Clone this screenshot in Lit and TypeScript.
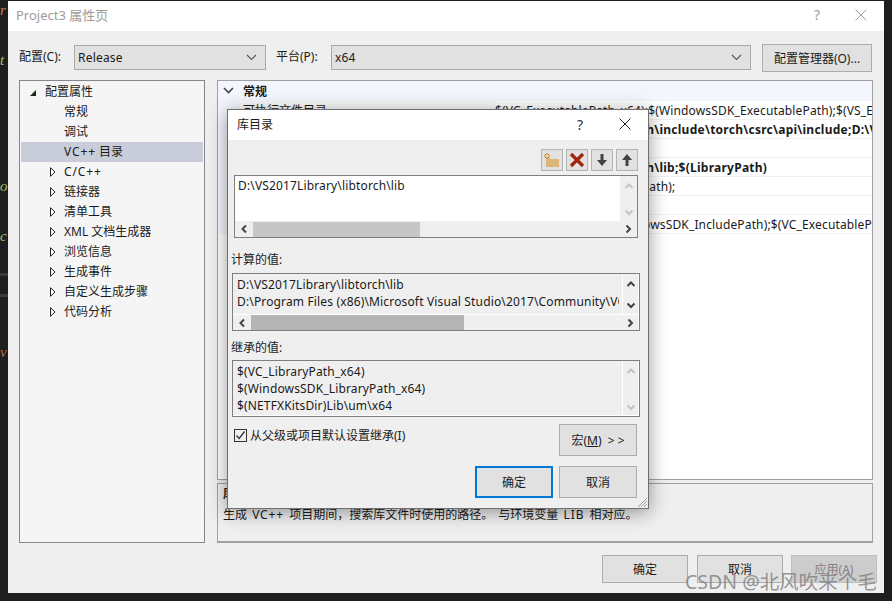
import { LitElement, html, css } from "lit";
import { customElement } from "lit/decorators.js";

const chev = (dir: "u" | "d" | "l" | "r", color: string) => {
  const p = { u: "M1.5 7 5 3.5 8.5 7", d: "M1.5 3.5 5 7 8.5 3.5", l: "M7 1.5 3.5 5 7 8.5", r: "M3.5 1.5 7 5 3.5 8.5" }[dir];
  return html`<svg width="10" height="10" viewBox="0 0 10 10"><path d=${p} fill="none" stroke=${color} stroke-width="2"/></svg>`;
};

const comboChev = html`<svg width="11" height="7" viewBox="0 0 11 7"><path d="M1 1 5.5 5.5 10 1" fill="none" stroke="#555" stroke-width="1.1"/></svg>`;

const ls = (t: string) => html`<span class="ls">${t}</span>`;

const treeItems: [unknown, boolean, boolean][] = [
  ["常规", false, false],
  ["调试", false, false],
  [html`${ls("VC++")} 目录`, false, true],
  [ls("C/C++"), true, false],
  ["链接器", true, false],
  ["清单工具", true, false],
  ["XML 文档生成器", true, false],
  ["浏览信息", true, false],
  ["生成事件", true, false],
  ["自定义生成步骤", true, false],
  ["代码分析", true, false],
];

const rows: [string, string, boolean][] = [
  ["可执行文件目录", "$(VC_ExecutablePath_x64);$(WindowsSDK_ExecutablePath);$(VS_ExecutablePath);$(MSBuild_ExecutablePath)", false],
  ["包含目录", "D:\\VS2017Library\\libtorch\\include\\torch\\csrc\\api\\include;D:\\VS2017Library\\libtorch\\include", true],
  ["引用目录", "$(VC_ReferencesPath_x64);", false],
  ["库目录", "D:\\VS2017Library\\libtorch\\lib;$(LibraryPath)", true],
  ["库 WinRT 目录", "$(WindowsSDK_MetadataPath);", false],
  ["源目录", "$(VC_SourcePath);", false],
  ["排除目录", "$(VC_IncludePath);$(WindowsSDK_IncludePath);$(VC_ExecutablePath_x64);$(VC_LibraryPath_x64)", false],
];

@customElement("app-root")
export class AppRoot extends LitElement {
  static styles = css`
    :host { display: block; width: 892px; height: 601px; position: relative; overflow: hidden; background: #1e1e1e;
      font-family: "Noto Sans", "Noto Sans CJK SC", sans-serif; font-size: 12px; color: #1a1a1a; }
    .ls { letter-spacing: .9px; }
    .bgcode { position: absolute; left: 0; font: italic 15px "Liberation Serif", serif; line-height: 16px; }
    .c1 { top: 2px; color: #d08050; }
    .c2 { top: 52px; color: #a5c070; }
    .c3 { top: 178px; color: #a5c070; }
    .c4 { top: 228px; color: #a5c070; }
    .c5 { top: 344px; color: #b06a40; }
    .bgline { position: absolute; left: 0; width: 8px; height: 3px; background: #3a3a3a; }
    .l1 { top: 273px; }
    .l2 { top: 294px; }
    .win { position: absolute; left: 8px; top: 1px; width: 876px; height: 592px; background: #efefef; display: flex; flex-direction: column; }
    .titlebar { height: 30px; box-sizing: border-box; flex: none; background: #fff; display: flex; align-items: center; padding: 0 0 3px 8px; color: #9c9c9c; font-size: 13px; }
    .titlebar .t { flex: 1; }
    .qmark { font-size: 14px; width: 12px; text-align: center; margin-right: 32px; }
    .dt .qmark { margin-right: 33px; color: #333; }
    .x { display: block; margin-right: 17px; }
    .cfg { display: flex; align-items: flex-start; height: 28px; margin-top: 13px; padding-left: 11px; }
    .cfg .lab { white-space: nowrap; width: 55px; line-height: 25px; }
    .cfg .lab.p { margin-left: 10px; }
    .combo { height: 25px; box-sizing: border-box; margin-top: 1px; background: #e1e1e1; border: 1px solid #a8a8a8; display: flex; align-items: center; justify-content: space-between; padding: 0 8px 1px 3px; letter-spacing: .2px; }
    .combo.a { width: 192px; }
    .combo.b { width: 420px; }
    .btn { box-sizing: border-box; background: #e1e1e1; border: 1px solid #adadad; display: flex; align-items: center; justify-content: center; white-space: nowrap; }
    .cm { width: 110px; height: 28px; margin-left: 11px; padding-bottom: 1px; }
    .panels { display: flex; margin-top: 8px; margin-left: 11px; height: 463px; }
    .tree { width: 186px; box-sizing: border-box; border: 1px solid #86878c; background: #f5f5f5; padding: 1px; flex: none; }
    .ti { height: 20px; box-sizing: border-box; display: flex; align-items: center; position: relative; padding: 0 0 2px 43px; white-space: pre; }
    .ti.root { padding-left: 24px; }
    .ti.sel { background: #c9ccd9; }
    .ti svg { position: absolute; }
    .tri { left: 9px; top: 8px; }
    .ex { left: 29px; top: 5px; }
    .right { width: 656px; margin-left: 12px; display: flex; flex-direction: column; flex: none; }
    .grid { height: 400px; box-sizing: border-box; border: 1px solid #a0a0a0; background: #fff; overflow: hidden; flex: none; }
    .ghead { height: 20px; background: #f3f6fc; display: flex; align-items: center; font-weight: 700; padding-left: 25px; position: relative; }
    .ghead svg { position: absolute; left: 5px; top: 6px; }
    .grow { height: 19px; display: grid; grid-template-columns: 21px 255px 1fr; box-shadow: inset 0 -1px 0 #f0f0f0; line-height: 19px; white-space: nowrap; overflow: hidden; }
    .grow .g { background: #f3f6fc; }
    .grow .n { background: #fafafa; padding-left: 4px; box-shadow: inset 0 -1px 0 #f0f0f0; }
    .grow .v { padding-left: 1px; overflow: hidden; letter-spacing: .15px; }
    .grow .v.b { font-weight: 700; letter-spacing: .25px; }
    .desc { margin-top: 3px; height: 60px; box-sizing: border-box; border: 1px solid #a0a0a0; border-bottom-width: 2px; padding: 0 5px; line-height: 20px; }
    .desc .h { font-weight: 700; }
    .desc .b { white-space: pre; word-spacing: 2px; padding-top: 1px; }
    .foot { display: flex; margin-top: 12px; margin-left: 594px; gap: 9px; }
    .foot .btn { width: 86px; height: 28px; padding-bottom: 1px; }
    .foot .btn.dis { margin-left: -1px; background: #ccc; border-color: #bfbfbf; color: #838383; }

    .dlg { position: absolute; left: 227px; top: 109px; width: 422px; height: 400px; box-sizing: border-box; border: 1px solid #6f6f6f;
      background: #efefef; box-shadow: 0 3px 18px rgba(0,0,0,.4); display: flex; flex-direction: column; }
    .dt { height: 30px; box-sizing: border-box; flex: none; background: #fff; display: flex; align-items: center; padding: 0 0 2px 9px; color: #1a1a1a; }
    .dt .t { flex: 1; }
    .tools { display: flex; justify-content: flex-end; gap: 3px; margin: 9px 10px 0 0; height: 22px; flex: none; }
    .tb { width: 22px; height: 22px; box-sizing: border-box; background: #e1e1e1; border: 1px solid #b4b4b4; display: flex; align-items: center; justify-content: center; }
    .box { box-sizing: border-box; border: 1px solid #7e7e7e; position: relative; display: grid; overflow: hidden; flex: none; }
    .box1 { margin: 4px 0 0 6px; width: 404px; height: 63px; grid-template: 1fr 16px / 1fr 17px; background: #efefef; }
    .box2 { margin: 0 0 0 4px; width: 408px; height: 58px; grid-template: 1fr 16px / 1fr 17px; background: #efefef; box-shadow: inset -1px 0 0 #fff; }
    .box3 { margin: 0 0 0 4px; width: 408px; height: 57px; grid-template: 1fr / 1fr 17px; background: #efefef; box-shadow: inset -1px -1px 0 #fff; }
    .txt { line-height: 17px; white-space: nowrap; overflow: hidden; padding: 1px 0 0 4px; min-width: 0; letter-spacing: .15px; }
    .box1 .txt { background: #fff; padding-left: 3px; }
    .box2 .txt { padding-top: 2px; margin-right: 3px; }
    .box3 .txt { padding-top: 2px; margin-right: 3px; }
    .vs { display: flex; flex-direction: column; justify-content: space-between; align-items: center; padding: 5px 0 4px; box-sizing: border-box; }
    .box2 .vs, .box3 .vs { border-left: 1px solid #fff; }
    .hs { grid-column: 1 / span 2; display: flex; align-items: center; }
    .box2 .hs { border-top: 1px solid #fff; }
    .hs .a { width: 18px; flex: none; display: flex; justify-content: center; }
    .hs .th { height: 15px; }
    .hs .sp { flex: 1; }
    .lbl { height: 20px; line-height: 20px; margin-left: 3px; flex: none; }
    .lbl.m1 { margin-top: 12px; margin-bottom: 3px; }
    .lbl.m2 { margin-top: 7px; margin-bottom: 2px; }
    .chkrow { display: flex; margin: 7px 11px 0 6px; height: 32px; flex: none; }
    .chk { width: 13px; height: 13px; box-sizing: border-box; border: 1px solid #333; background: #efefef; margin: 5px 3px 0 0; display: flex; }
    .chkt { line-height: 23px; flex: 1; }
    .mb { width: 78px; height: 32px; }
    .okrow { display: flex; justify-content: flex-end; gap: 6px; margin: 10px 11px 0 0; flex: none; }
    .okrow .btn { width: 78px; height: 32px; }
    .okrow .ok { border: 2px solid #0078d7; }
    .grip { position: absolute; right: 0; bottom: 0; }
    .wm { position: absolute; left: 685px; top: 569px; font-size: 19.5px; line-height: 26px; color: rgba(125,125,125,.8); white-space: nowrap; }
  `;

  private vbar(c: string) {
    return html`<div class="vs">${chev("u", c)}${chev("d", c)}</div>`;
  }

  private hbar(thumbW: number, thumbC: string) {
    return html`<div class="hs">
      <div class="a">${chev("l", "#444")}</div>
      <div class="th" style="width:${thumbW}px;background:${thumbC}"></div>
      <div class="sp"></div>
      <div class="a">${chev("r", "#444")}</div>
    </div>`;
  }

  render() {
    return html`
      <div class="bgcode c1">r</div>
      <div class="bgcode c2">t</div>
      <div class="bgcode c3">o</div>
      <div class="bgcode c4">c</div>
      <div class="bgline l1"></div>
      <div class="bgline l2"></div>
      <div class="bgcode c5">v</div>

      <div class="win">
        <div class="titlebar">
          <div class="t">Project3 属性页</div>
          <div class="qmark">?</div>
          <svg class="x" width="12" height="12" viewBox="0 0 12 12"><path d="M.5.5l11 11M11.5.5l-11 11" stroke="#9c9c9c" fill="none"/></svg>
        </div>
        <div class="cfg">
          <span class="lab">配置(C):</span>
          <div class="combo a"><span>Release</span>${comboChev}</div>
          <span class="lab p">平台(P):</span>
          <div class="combo b"><span>x64</span>${comboChev}</div>
          <div class="btn cm">配置管理器(O)...</div>
        </div>
        <div class="panels">
          <div class="tree">
            <div class="ti root">
              <svg class="tri" width="6" height="6" viewBox="0 0 6 6"><path d="M6 0V6H0Z" fill="#222"/></svg>
              <span>配置属性</span>
            </div>
            ${treeItems.map(([t, exp, sel]) => html`
              <div class="ti ${sel ? "sel" : ""}">${exp ? html`<svg class="ex" width="6" height="10" viewBox="0 0 6 10"><path d="M.5.7 5 5 .5 9.3Z" fill="#fff" stroke="#222"/></svg>` : ""}<span>${t}</span></div>`)}
          </div>
          <div class="right">
            <div class="grid">
              <div class="ghead">
                <svg width="11" height="7" viewBox="0 0 11 7"><path d="M1 1 5.5 5.5 10 1" fill="none" stroke="#444" stroke-width="1.6"/></svg>
                常规
              </div>
              ${rows.map(([n, v, b]) => html`
                <div class="grow"><div class="g"></div><div class="n">${n}</div><div class="v ${b ? "b" : ""}">${v}</div></div>`)}
            </div>
            <div class="desc">
              <div class="h">库目录</div>
              <div class="b">生成 ${ls("VC++")} 项目期间，搜索库文件时使用的路径。 与环境变量 ${ls("LIB")} 相对应。</div>
            </div>
          </div>
        </div>
        <div class="foot">
          <div class="btn">确定</div>
          <div class="btn">取消</div>
          <div class="btn dis">应用(A)</div>
        </div>
      </div>

      <div class="dlg">
        <div class="dt">
          <div class="t">库目录</div>
          <div class="qmark">?</div>
          <svg class="x" width="12" height="12" viewBox="0 0 12 12"><path d="M.5.5l11 11M11.5.5l-11 11" stroke="#222" fill="none"/></svg>
        </div>
        <div class="tools">
          <div class="tb"><svg width="18" height="16" viewBox="0 0 18 16">
            <path d="M3 6h4l1 1h8v8H3Z" fill="#dcb67a"/>
            <path d="M4 1v6M1 4h6M2 2l4 4M6 2 2 6" stroke="#c27d1a" stroke-width="1"/>
            <circle cx="4" cy="4" r="1.2" fill="#f5e0b0"/>
          </svg></div>
          <div class="tb"><svg width="16" height="16" viewBox="0 0 16 16"><path d="M2 2 14 14M14 2 2 14" stroke="#a1260d" stroke-width="3.2"/></svg></div>
          <div class="tb"><svg width="12" height="13" viewBox="0 0 12 13"><path d="M4.5 0h3v6H11L6 12 1 6h3.5Z" fill="#424242"/></svg></div>
          <div class="tb"><svg width="12" height="13" viewBox="0 0 12 13"><path d="M4.5 12h3V6H11L6 0 1 6h3.5Z" fill="#424242"/></svg></div>
        </div>
        <div class="box box1">
          <div class="txt">D:\\VS2017Library\\libtorch\\lib</div>
          ${this.vbar("#c4c4c4")}
          ${this.hbar(167, "#c6c6c6")}
        </div>
        <div class="lbl m1">计算的值:</div>
        <div class="box box2">
          <div class="txt">D:\\VS2017Library\\libtorch\\lib<br>D:\\Program Files (x86)\\Microsoft Visual Studio\\2017\\Community\\VC\\Tools\\MSVC</div>
          ${this.vbar("#444")}
          ${this.hbar(213, "#b4b4b4")}
        </div>
        <div class="lbl m2">继承的值:</div>
        <div class="box box3">
          <div class="txt">$(VC_LibraryPath_x64)<br>$(WindowsSDK_LibraryPath_x64)<br>$(NETFXKitsDir)Lib\\um\\x64</div>
          ${this.vbar("#c4c4c4")}
        </div>
        <div class="chkrow">
          <div class="chk"><svg width="11" height="11" viewBox="0 0 11 11"><path d="M1.5 5.5 4.2 8.5 9.5 1.5" fill="none" stroke="#333" stroke-width="1.3"/></svg></div>
          <div class="chkt">从父级或项目默认设置继承(I)</div>
          <div class="btn mb">宏(<u>M</u>)&nbsp;&nbsp;&gt; &gt;</div>
        </div>
        <div class="okrow">
          <div class="btn ok">确定</div>
          <div class="btn">取消</div>
        </div>
        <svg class="grip" width="12" height="12" viewBox="0 0 12 12"><path d="M11 2 2 11M11 5 5 11M11 8 8 11" stroke="#a0a0a0"/></svg>
      </div>
      <div class="wm">CSDN @北风吹来个毛</div>
    `;
  }
}
